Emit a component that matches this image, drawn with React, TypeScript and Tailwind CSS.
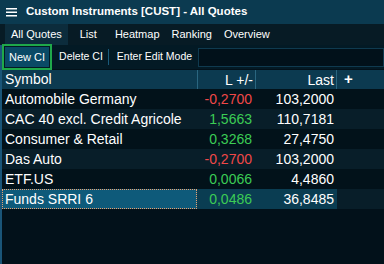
const rows = [
  { symbol: 'Automobile Germany', change: '-0,2700', last: '103,2000' },
  { symbol: 'CAC 40 excl. Credit Agricole', change: '1,5663', last: '110,7181' },
  { symbol: 'Consumer & Retail', change: '0,3268', last: '27,4750' },
  { symbol: 'Das Auto', change: '-0,2700', last: '103,2000' },
  { symbol: 'ETF.US', change: '0,0066', last: '4,4860' },
  { symbol: 'Funds SRRI 6', change: '0,0486', last: '36,8485' },
]

const tabs = [
  { label: 'All Quotes', cls: 'flex items-center bg-[#0c2c3c] px-[6px]' },
  { label: 'List', cls: 'ml-[12px] flex items-center' },
  { label: 'Heatmap', cls: 'ml-[18px] flex items-center' },
  { label: 'Ranking', cls: 'ml-[12px] flex items-center' },
  { label: 'Overview', cls: 'ml-[12px] flex items-center' },
]

export default function App() {
  return (
    <div className="flex h-[264px] w-[384px] flex-col overflow-hidden bg-[#02111a] font-['Liberation_Sans',Arial,sans-serif] text-white">
      <div className="flex h-[24px] shrink-0 items-center bg-[#0b3a50] pl-[6px]">
        <svg width="11" height="10" viewBox="0 0 11 10" className="shrink-0">
          <rect x="0" y="1" width="11" height="1.5" fill="white" />
          <rect x="0" y="4.5" width="11" height="1.5" fill="white" />
          <rect x="0" y="8" width="11" height="1.5" fill="white" />
        </svg>
        <span className="ml-[9px] text-[11.5px] font-bold">
          Custom Instruments [CUST] - All Quotes
        </span>
      </div>

      <div className="flex h-[21px] shrink-0 items-stretch bg-[#071b25] pl-[5px] text-[11px]">
        {tabs.map((tab) => (
          <div className={tab.cls} key={tab.label}>
            {tab.label}
          </div>
        ))}
      </div>

      <div className="flex flex-1 flex-col border-l-2 border-[#1a5578]">
        <div className="flex h-[24px] shrink-0 items-center bg-[#031a25] text-[10.5px]">
          <div className="flex h-[26px] items-center border-2 border-[#1fa84a] p-[1px] text-[11px]">
            <div className="flex h-full items-center bg-[#0a4a66] px-[4px]">New CI</div>
          </div>
          <span className="ml-[7px]">Delete CI</span>
          <span className="ml-[5px] h-[16px] w-px bg-[#1a5a7a]" />
          <span className="ml-[8px]">Enter Edit Mode</span>
          <div className="ml-[6px] h-[19px] flex-1 border border-[#0f3a4f] bg-[#01111a]" />
        </div>

        <div className="mt-px flex h-[19px] shrink-0 items-center bg-[#0c3a50] text-[14px]">
          <div className="w-[195px] pl-[3px]">Symbol</div>
          <div className="h-full w-[58px] border-l border-[#2a6680] pr-[2px] text-right">L +/-</div>
          <div className="h-full w-[82px] border-x border-[#2a6680] pr-[2px] text-right">Last</div>
          <div className="pl-[7px] text-[15px] font-bold">+</div>
        </div>

        {rows.map((row, i) => {
          const selected = i === rows.length - 1
          const neg = row.change.startsWith('-')
          return (
            <div
              className={
                i % 2 === 0
                  ? 'flex h-[20px] items-center bg-[#02121a] text-[14px]'
                  : 'flex h-[20px] items-center bg-[#081e29] text-[14px]'
              }
              key={row.symbol}
            >
              <div
                className={
                  selected
                    ? 'flex h-full w-[195px] items-center border border-dotted border-[#e8a070] bg-[#0e5a7a] pl-[2px]'
                    : 'w-[195px] pl-[3px]'
                }
              >
                {row.symbol}
              </div>
              <div
                className={
                  (selected ? 'flex h-full items-center justify-end bg-[#0a3d52] ' : '') +
                  'w-[58px] pr-[3px] text-right ' +
                  (neg ? 'text-[#f04848]' : 'text-[#3ccc55]')
                }
              >
                {row.change}
              </div>
              <div
                className={
                  (selected ? 'flex h-full items-center justify-end bg-[#0a3d52] ' : '') +
                  'w-[82px] pr-[3px] text-right'
                }
              >
                {row.last}
              </div>
            </div>
          )
        })}
      </div>
    </div>
  )
}
